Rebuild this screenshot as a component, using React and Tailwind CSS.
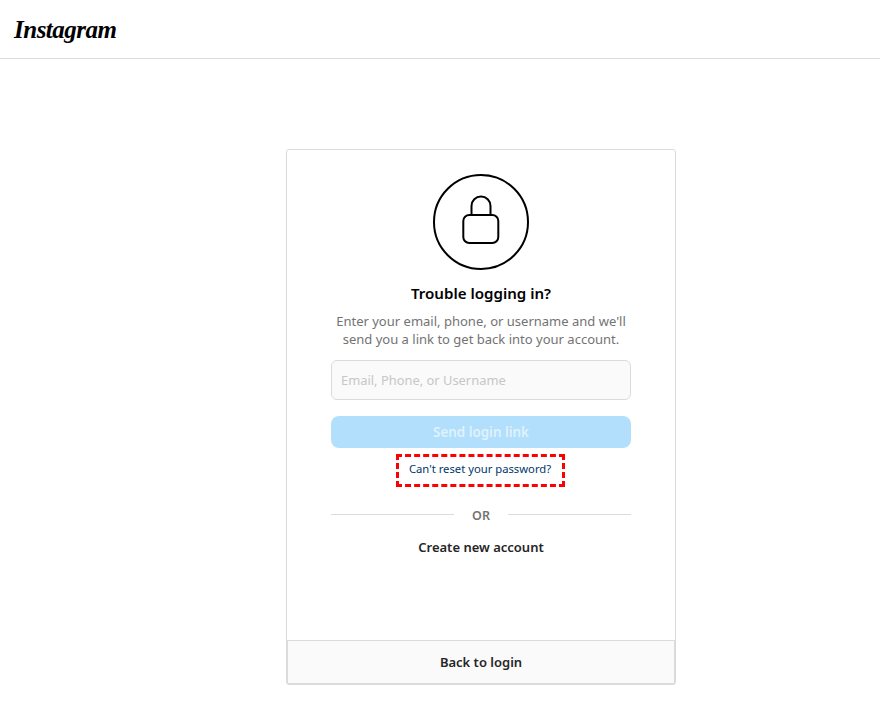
import React from 'react';

const sans = { fontFamily: '"Noto Sans", sans-serif' };

function LockIcon() {
  return (
    <svg width="96" height="96" viewBox="0 0 96 96" fill="none" stroke="#000" strokeWidth="2">
      <circle cx="48" cy="48" r="47" />
      <path d="M38.5 41V32a9.5 9.5 0 0 1 19 0V41" />
      <rect x="30.3" y="41" width="35" height="28" rx="6" />
    </svg>
  );
}

export default function App() {
  return (
    <div className="min-h-[701px] bg-white text-[#262626] font-['Noto_Sans',sans-serif]">
      <header className="h-[59px] border-b border-[#dbdbdb] flex items-center pl-[14px]">
        <span className="font-['Liberation_Serif',serif] italic font-bold text-[25px] leading-none text-black tracking-[-0.5px]">Instagram</span>
      </header>

      <main className="pl-[286px] pt-[90px]">
        <div className="w-[390px] h-[536px] border border-[#dbdbdb] rounded-[3px] flex flex-col">
          <div className="flex-1 px-[44px] pt-[24px] flex flex-col items-center">
            <LockIcon />
            <h1 className="mt-[13px] text-[15.1px] leading-5 font-semibold text-black">Trouble logging in?</h1>
            <p className="mt-[9px] text-[13.03px] leading-[18px] text-[#737373] text-center whitespace-nowrap">
              Enter your email, phone, or username and we'll<br />send you a link to get back into your account.
            </p>
            <input
              placeholder="Email, Phone, or Username"
              style={sans}
              className="mt-[12px] w-full h-[40px] px-[9px] rounded-[6px] border border-[#dbdbdb] bg-[#fafafa] text-[12.9px] placeholder:text-[#c7c7c7] outline-none"
            />
            <button className="mt-[16px] w-full h-[32px] rounded-[8px] bg-[#b2dffc] text-white/60 text-[13.4px] font-semibold">
              Send login link
            </button>
            <a className="mt-[6px] mr-[2px] w-[169px] h-[33px] pb-[2px] border-[3px] border-dashed border-[#ff0000] flex items-center justify-center text-[11.25px] text-[#00376b]">
              Can't reset your password?
            </a>
            <div className="mt-[18px] w-full flex items-center">
              <div className="flex-1 h-px bg-[#dbdbdb]" />
              <span className="mx-[18px] translate-y-[2px] text-[12.5px] font-semibold text-[#737373]">OR</span>
              <div className="flex-1 h-px bg-[#dbdbdb]" />
            </div>
            <a className="mt-[14px] text-[13px] font-semibold text-[#262626]">Create new account</a>
          </div>
          <a className="h-[44px] pt-[2px] border border-[#dbdbdb] bg-[#fafafa] flex items-center justify-center text-[13px] font-semibold text-[#262626]">
            Back to login
          </a>
        </div>
      </main>
    </div>
  );
}
